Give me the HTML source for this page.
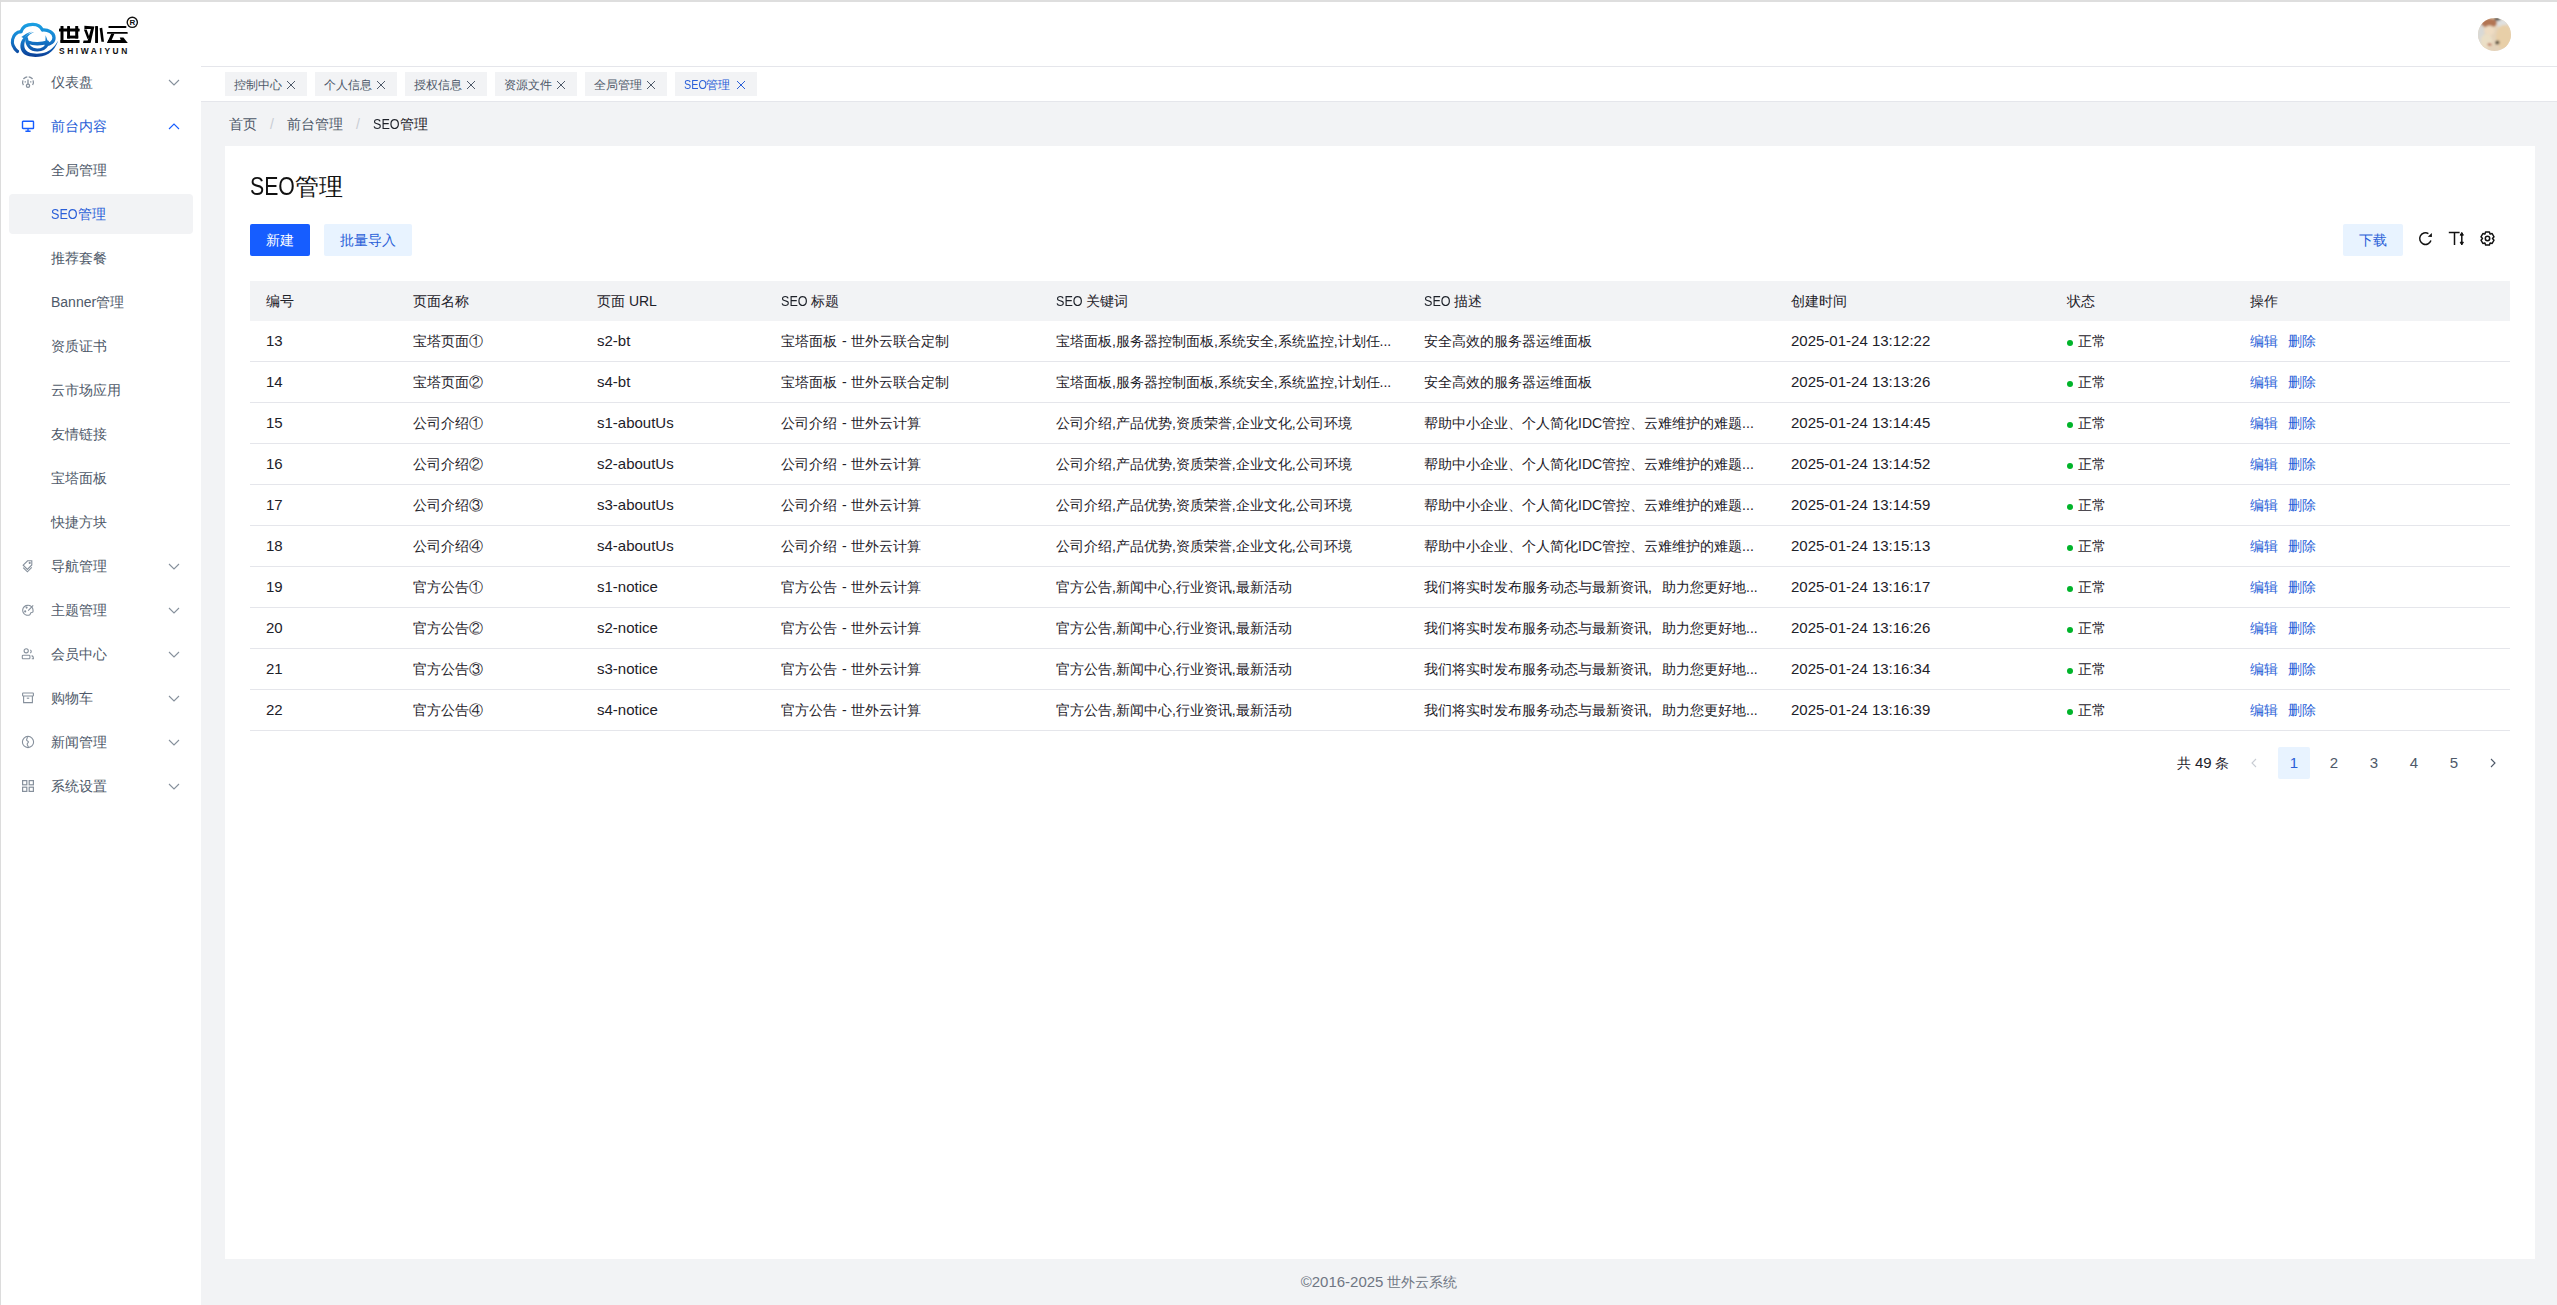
<!DOCTYPE html>
<html><head><meta charset="utf-8">
<style>
*{box-sizing:border-box;margin:0;padding:0}
html,body{width:2557px;height:1305px;overflow:hidden;background:#fff;font-family:"Liberation Sans",sans-serif;color:#1d2129;font-size:14px}
.abs{position:absolute}
#topline{left:0;top:0;width:2557px;height:2px;background:#dedede}
#leftline{left:0;top:0;width:1px;height:1305px;background:#dcdcdc}
#main{left:201px;top:102px;width:2356px;height:1203px;background:#f2f3f5}
#tabbar{left:201px;top:66px;width:2356px;height:36px;border-top:1px solid #e5e6eb;border-bottom:1px solid #e5e6eb;background:#fff}
.tag{position:absolute;top:5px;height:24px;width:82px;background:#f2f3f5;color:#4e5969;font-size:12px;line-height:26px;padding-left:9px;white-space:nowrap}
.tag .x{position:absolute;top:1px;left:60px}
.tag.on{color:#2a5fd8}
.mi{position:absolute;left:9px;width:184px;height:40px;line-height:40px;color:#4e5969;font-size:14px;border-radius:4px}
.mi .t{position:absolute;left:42px;top:0;white-space:nowrap}
.mi.sel,.mi.open{color:#2a5fd8}
.mi.sel{background:#f2f3f5}
.mi .ic{position:absolute;left:12px;top:13px;width:14px;height:14px;line-height:0}
.mi .ar{position:absolute;left:159px;top:16px}
#bc{left:229px;top:113px;height:22px;line-height:22px;font-size:14px;color:#4e5969;white-space:nowrap}
#bc .s{color:#c9cdd4;display:inline-block;width:30px;text-align:center}
#bc .cur{color:#1d2129}
#card{left:225px;top:146px;width:2310px;height:1113px;background:#fff}
#title{left:250px;top:168px;font-size:24px;line-height:36px;color:#111;white-space:nowrap}
#title .sl{display:inline-block;font-size:25px;transform:scaleX(.85);transform-origin:0 0;margin-right:-7.9px}
.lat,.tr .c.lat{font-size:15px}
.seo{display:inline-block;transform:scaleX(.9);transform-origin:0 0;margin-right:-3px}
.bl{color:#2a5fd8}
.btn{position:absolute;top:224px;height:32px;line-height:32px;font-size:14px;text-align:center;border-radius:2px;white-space:nowrap}
#table{left:250px;top:281px;width:2260px;height:450px}
.thead{position:absolute;left:0;top:0;width:2260px;height:40px;background:#f2f3f5}
.tr{position:absolute;left:0;width:2260px;height:41px;border-bottom:1px solid #e5e6eb}
.c{position:absolute;top:0;line-height:40px;white-space:nowrap;font-size:14px;color:#1d2129}
.thead .c{font-weight:normal}
.dot{display:inline-block;width:6px;height:6px;border-radius:50%;background:#00b42a;margin-right:5px;vertical-align:0}
.op{color:#2a5fd8}
.pg{position:absolute;top:747px;width:32px;height:32px;line-height:32px;text-align:center;font-size:15px;color:#4e5969;border-radius:2px;letter-spacing:0}
#footer{left:201px;top:1271px;width:2356px;text-align:center;font-size:14px;line-height:22px;color:#6f7683;white-space:nowrap}
#footer .lat{font-size:15px}
</style></head>
<body>
<div id="topline" class="abs"></div>
<div id="main" class="abs"></div>
<div id="tabbar" class="abs">
<div class="tag" style="left:24px">控制中心<svg class="x" width="12" height="24" viewBox="0 0 12 24" fill="none" stroke="#4e5969" stroke-width="1"><path d="M2 8l8 8M10 8l-8 8"/></svg></div>
<div class="tag" style="left:114px">个人信息<svg class="x" width="12" height="24" viewBox="0 0 12 24" fill="none" stroke="#4e5969" stroke-width="1"><path d="M2 8l8 8M10 8l-8 8"/></svg></div>
<div class="tag" style="left:204px">授权信息<svg class="x" width="12" height="24" viewBox="0 0 12 24" fill="none" stroke="#4e5969" stroke-width="1"><path d="M2 8l8 8M10 8l-8 8"/></svg></div>
<div class="tag" style="left:294px">资源文件<svg class="x" width="12" height="24" viewBox="0 0 12 24" fill="none" stroke="#4e5969" stroke-width="1"><path d="M2 8l8 8M10 8l-8 8"/></svg></div>
<div class="tag" style="left:384px">全局管理<svg class="x" width="12" height="24" viewBox="0 0 12 24" fill="none" stroke="#4e5969" stroke-width="1"><path d="M2 8l8 8M10 8l-8 8"/></svg></div>
<div class="tag on" style="left:474px"><span class="seo">SEO</span>管理<svg class="x" width="12" height="24" viewBox="0 0 12 24" fill="none" stroke="#2a5fd8" stroke-width="1"><path d="M2 8l8 8M10 8l-8 8"/></svg></div>
</div>
<div id="leftline" class="abs"></div>

<!-- logo -->
<svg class="abs" style="left:0;top:0" width="150" height="62" viewBox="0 0 150 62">
<defs>
<linearGradient id="lg1" x1="0" y1="22" x2="0" y2="57" gradientUnits="userSpaceOnUse"><stop offset="0" stop-color="#1ba3e4"/><stop offset=".45" stop-color="#1783d2"/><stop offset="1" stop-color="#0a3d96"/></linearGradient>
</defs>
<g fill="none" stroke="url(#lg1)" stroke-linecap="round" stroke-linejoin="round">
<path d="M21 31.6C22.5 27 27 24.3 33 24.4C37.5 24.5 41 26.8 42.5 30C48 29.5 53.8 32.5 54 37.5C54.2 41.5 50.5 44.3 46 44.6" stroke-width="3.3"/>
<path d="M21 31.6C16.8 32 13.6 35 12.6 39.5C11.8 43.5 13.5 48 17.5 51.5" stroke-width="3.1"/>
<path d="M28.5 42.2C33 44.2 41 44.4 47.5 42.2" stroke-width="3.4"/>
<path d="M26.6 38.6C26.8 46 31 50.2 37.5 50C42 49.8 45.5 47.6 47 45" stroke-width="3"/>
</g>
<g fill="url(#lg1)">
<path d="M34.4 31.8C28 33.5 22 37.5 20.6 43.5C19.5 49 22 54 27.5 55.8C33 57.6 42 57.5 48.5 53.8C53 51.2 56.5 46 58.2 40.6C55.5 45.5 51.5 50 46.5 52C41 54.2 33.5 54.3 28.8 52.3C24.8 50.5 23.6 46.5 24.6 42.5C25.8 37.8 29.5 34 34.4 31.8Z"/>
<path d="M21.3 37C24 34.6 28 32.6 31.8 31.4C28.5 33.4 25.6 35.6 23.8 38.2Z"/>
<path d="M45.6 35.2L47.9 41.6L45.4 41.9Z"/>
<path d="M17.8 52.2L14.6 49.6L19.2 50.6Z"/>
</g>
<g fill="#000">
<rect x="59" y="28.6" width="20.6" height="2.9" rx=".6"/>
<rect x="60.5" y="26" width="3" height="16.9" rx=".5"/>
<rect x="60.5" y="40" width="19.1" height="2.9" rx=".6"/>
<rect x="67.1" y="26" width="2.9" height="12.5" rx=".5"/>
<rect x="75.2" y="26" width="3" height="12.5" rx=".5"/>
<rect x="67.1" y="35.6" width="11.1" height="2.9"/>
<path d="M84.4 25.8L94.4 26.4L90.6 42.9L83 42.9L83.6 40.4L87.7 40.4L90.9 28.9L84.4 28.9Z"/>
<path d="M83.9 29.4L86.7 29.4L89.3 37L87.6 39.2Z"/>
<rect x="95.1" y="26" width="2.9" height="16.9" rx=".5"/>
<path d="M99.6 28.2L102.2 27.8L104 41.8L101.4 41.8Z"/>
<rect x="108.3" y="26" width="18.2" height="1.9" rx=".9"/>
<rect x="106.9" y="32" width="20.9" height="1.8" rx=".9"/>
<path d="M111.2 33.8L114.4 33.8L110.4 42.9L107 42.9Z"/>
<path d="M108.2 40L121.6 40L122.6 42.9L107.4 42.9Z"/>
<path d="M119.8 37.4L123.4 37.4L127.8 42.9L121.6 42.9Z"/>
</g>
<text x="59" y="54" font-family="Liberation Sans" font-size="8.4" font-weight="bold" fill="#111" style="letter-spacing:2.6px">SHIWAIYUN</text>
<circle cx="132.3" cy="22.3" r="5.1" fill="none" stroke="#111" stroke-width="1.4"/>
<text x="129.6" y="25.3" font-family="Liberation Sans" font-size="8" font-weight="bold" fill="#111">R</text>
</svg>

<!-- avatar -->
<svg class="abs" style="left:2478px;top:18px" width="33" height="33" viewBox="0 0 33 33">
<defs><clipPath id="avc"><circle cx="16.5" cy="16.5" r="16.5"/></clipPath><filter id="avb" x="-20%" y="-20%" width="140%" height="140%"><feGaussianBlur stdDeviation=".9"/></filter></defs>
<g clip-path="url(#avc)">
<rect width="33" height="33" fill="#e4d3bb"/>
<g filter="url(#avb)">
<ellipse cx="23.5" cy="5" rx="6" ry="4" fill="#dfe0df"/>
<ellipse cx="26" cy="19" rx="8" ry="12" fill="#e8cfa8"/>
<ellipse cx="2.5" cy="16" rx="4" ry="11" fill="#d9d9d6"/>
<ellipse cx="11" cy="5" rx="8" ry="4.5" fill="#b27552"/>
<ellipse cx="11.5" cy="12.5" rx="5" ry="5" fill="#efdcc2"/>
<ellipse cx="8.5" cy="23" rx="6" ry="7" fill="#ebdfc6"/>
<ellipse cx="19.5" cy="24.5" rx="2" ry="2" fill="#4d4535"/>
<ellipse cx="11.5" cy="26.5" rx="2" ry="1.2" fill="#b86a50"/>
<ellipse cx="19.5" cy="1" rx="3" ry="1.5" fill="#3a3a3a"/>
</g>
</g>
</svg>

<!-- sidebar -->
<div class="abs" style="left:0;top:0;width:201px;height:1305px">
<div class="mi" style="top:62px"><span class="ic"><svg width="14" height="14" viewBox="0 0 14 14" fill="none" stroke="#86909c" stroke-width="1.3"><path d="M3 10.8A5.4 5.4 0 1 1 11 10.8" stroke-dasharray="4.6 1.3" stroke-dashoffset="-1"/><path d="M7 4.6V9"/><circle cx="7" cy="10.7" r="1.6"/><path d="M3.6 6.9h1.3M9.1 6.9h1.3"/></svg></span><span class="t">仪表盘</span><svg class="ar" width="12" height="9" viewBox="0 0 12 9" fill="none" stroke="#86909c" stroke-width="1.1"><path d="M1 2L6 7L11 2"/></svg></div>
<div class="mi open" style="top:106px"><span class="ic"><svg width="14" height="14" viewBox="0 0 14 14" fill="none" stroke="#165dff" stroke-width="1.4"><rect x="1.5" y="2.2" width="11" height="7.3" rx=".6"/><path d="M7 9.8v2.3M4.4 12.3h5.2"/></svg></span><span class="t">前台内容</span><svg class="ar" width="12" height="9" viewBox="0 0 12 9" fill="none" stroke="#165dff" stroke-width="1.1"><path d="M1 7L6 2L11 7"/></svg></div>
<div class="mi" style="top:150px"><span class="t">全局管理</span></div>
<div class="mi sel" style="top:194px"><span class="t"><span class="seo">SEO</span>管理</span></div>
<div class="mi" style="top:238px"><span class="t">推荐套餐</span></div>
<div class="mi" style="top:282px"><span class="t">Banner管理</span></div>
<div class="mi" style="top:326px"><span class="t">资质证书</span></div>
<div class="mi" style="top:370px"><span class="t">云市场应用</span></div>
<div class="mi" style="top:414px"><span class="t">友情链接</span></div>
<div class="mi" style="top:458px"><span class="t">宝塔面板</span></div>
<div class="mi" style="top:502px"><span class="t">快捷方块</span></div>
<div class="mi" style="top:546px"><span class="ic"><svg width="14" height="14" viewBox="0 0 14 14" fill="none" stroke="#86909c" stroke-width="1.1"><path d="M2.2 6.2L6.6 1.8h4.2v4.2L6.4 10.4z"/><path d="M2.2 8.6l4.2 4.2 4.4-4.4"/><circle cx="8.7" cy="3.9" r=".5" fill="#86909c"/></svg></span><span class="t">导航管理</span><svg class="ar" width="12" height="9" viewBox="0 0 12 9" fill="none" stroke="#86909c" stroke-width="1.1"><path d="M1 2L6 7L11 2"/></svg></div>
<div class="mi" style="top:590px"><span class="ic"><svg width="14" height="14" viewBox="0 0 14 14" fill="none" stroke="#86909c" stroke-width="1.1"><path d="M11.6 5.2A5.2 5 0 1 0 8.5 12c1 -.3 .6-1.6 1.3-2.2.8-.6 2.3 0 2.3-1.5 0-1-.2-2.1-.5-3.1z"/><path d="M7.2 7.6L12.2 2.4"/><circle cx="4.2" cy="8.4" r=".5" fill="#86909c"/><circle cx="5.6" cy="4.6" r=".5" fill="#86909c"/></svg></span><span class="t">主题管理</span><svg class="ar" width="12" height="9" viewBox="0 0 12 9" fill="none" stroke="#86909c" stroke-width="1.1"><path d="M1 2L6 7L11 2"/></svg></div>
<div class="mi" style="top:634px"><span class="ic"><svg width="14" height="14" viewBox="0 0 14 14" fill="none" stroke="#86909c" stroke-width="1.1"><circle cx="5.2" cy="3.8" r="2.1"/><rect x="1.3" y="8.2" width="7.6" height="3.6" rx=".8"/><path d="M9.2 2.9a1.6 1.6 0 0 1 0 3"/><path d="M10.6 8.6c1 .3 1.8 1.2 1.8 2.3v.9h-1.6"/></svg></span><span class="t">会员中心</span><svg class="ar" width="12" height="9" viewBox="0 0 12 9" fill="none" stroke="#86909c" stroke-width="1.1"><path d="M1 2L6 7L11 2"/></svg></div>
<div class="mi" style="top:678px"><span class="ic"><svg width="14" height="14" viewBox="0 0 14 14" fill="none" stroke="#86909c" stroke-width="1.1"><rect x="1.6" y="2" width="10.8" height="3" rx=".6"/><path d="M2.6 5v6.6h8.8V5"/><path d="M5.8 7.2h2.4"/></svg></span><span class="t">购物车</span><svg class="ar" width="12" height="9" viewBox="0 0 12 9" fill="none" stroke="#86909c" stroke-width="1.1"><path d="M1 2L6 7L11 2"/></svg></div>
<div class="mi" style="top:722px"><span class="ic"><svg width="14" height="14" viewBox="0 0 14 14" fill="none" stroke="#86909c" stroke-width="1.1"><circle cx="7" cy="7" r="5.6"/><path d="M6.2 1.6c.6 1.4-.6 2.4-.6 3.4s1.6 1 1.8 1.8c.2.8-1.4 1.6-1.2 2.6.2 1 .8 1.2 1.2 2.8"/></svg></span><span class="t">新闻管理</span><svg class="ar" width="12" height="9" viewBox="0 0 12 9" fill="none" stroke="#86909c" stroke-width="1.1"><path d="M1 2L6 7L11 2"/></svg></div>
<div class="mi" style="top:766px"><span class="ic"><svg width="14" height="14" viewBox="0 0 14 14" fill="none" stroke="#86909c" stroke-width="1.2"><rect x="1.6" y="1.6" width="4.2" height="4.2"/><rect x="8.2" y="1.6" width="4.2" height="4.2"/><rect x="1.6" y="8.2" width="4.2" height="4.2"/><rect x="8.2" y="8.2" width="4.2" height="4.2"/></svg></span><span class="t">系统设置</span><svg class="ar" width="12" height="9" viewBox="0 0 12 9" fill="none" stroke="#86909c" stroke-width="1.1"><path d="M1 2L6 7L11 2"/></svg></div>
</div>

<div id="bc" class="abs">首页<span class="s">/</span>前台管理<span class="s">/</span><span class="cur"><span class="seo">SEO</span>管理</span></div>

<div id="card" class="abs"></div>
<div id="title" class="abs"><span class="sl">SEO</span>管理</div>
<div class="btn" style="left:250px;width:60px;background:#165dff;color:#fff">新建</div>
<div class="btn" style="left:324px;width:88px;background:#e8f3ff;color:#2a5fd8">批量导入</div>
<div class="btn" style="left:2343px;width:60px;background:#e8f3ff;color:#2a5fd8">下载</div>

<!-- toolbar icons -->
<svg class="abs" style="left:2417px;top:231px" width="16" height="16" viewBox="0 0 16 16"><path d="M11.4 2.6A5.8 5.8 0 1 0 13.95 9.6" fill="none" stroke="#111" stroke-width="1.5"/><path d="M14.9 2.1L14.9 6.1L10.7 5.7Z" fill="#111"/></svg>
<svg class="abs" style="left:2448px;top:231px" width="17" height="16" viewBox="0 0 17 16" fill="none" stroke="#111" stroke-width="1.5"><path d="M0.8 1.6h10.8M6.5 1.6v12.4"/><path d="M13.8 2.8v9.6"/><path d="M12.2 4.2l1.6-2.8 1.6 2.8zM12.2 11.2l1.6 2.8 1.6-2.8z" fill="#111" stroke-width="1"/></svg>
<svg class="abs" style="left:2479px;top:230px" width="17" height="17" viewBox="0 0 17 17" fill="none" stroke="#111" stroke-width="1.5" stroke-linejoin="round"><path d="M6.6 1.9h3.8l.7 2.2 2-.6 1.9 3.3-1.5 1.7 1.5 1.7-1.9 3.3-2-.6-.7 2.2H6.6l-.7-2.2-2 .6L2 10.2l1.5-1.7L2 6.8l1.9-3.3 2 .6z"/><circle cx="8.5" cy="8.5" r="2.2"/></svg>

<div id="table" class="abs">
<div class="thead">
<span class="c" style="left:16px">编号</span>
<span class="c" style="left:163px">页面名称</span>
<span class="c" style="left:347px">页面 URL</span>
<span class="c" style="left:531px"><span class="seo">SEO</span> 标题</span>
<span class="c" style="left:806px"><span class="seo">SEO</span> 关键词</span>
<span class="c" style="left:1174px"><span class="seo">SEO</span> 描述</span>
<span class="c" style="left:1541px">创建时间</span>
<span class="c" style="left:1817px">状态</span>
<span class="c" style="left:2000px">操作</span>
</div>
<div class="tr" style="top:40px">
<span class="c lat" style="left:16px">13</span>
<span class="c" style="left:163px">宝塔页面①</span>
<span class="c lat" style="left:347px">s2-bt</span>
<span class="c" style="left:531px">宝塔面板<span style="word-spacing:1px"> - </span>世外云联合定制</span>
<span class="c" style="left:806px">宝塔面板,服务器控制面板,系统安全,系统监控,计划任...</span>
<span class="c" style="left:1174px">安全高效的服务器运维面板</span>
<span class="c lat" style="left:1541px">2025-01-24 13:12:22</span>
<span class="c st" style="left:1817px"><i class="dot"></i>正常</span>
<span class="c op" style="left:2000px">编辑</span><span class="c op" style="left:2038px">删除</span>
</div>
<div class="tr" style="top:81px">
<span class="c lat" style="left:16px">14</span>
<span class="c" style="left:163px">宝塔页面②</span>
<span class="c lat" style="left:347px">s4-bt</span>
<span class="c" style="left:531px">宝塔面板<span style="word-spacing:1px"> - </span>世外云联合定制</span>
<span class="c" style="left:806px">宝塔面板,服务器控制面板,系统安全,系统监控,计划任...</span>
<span class="c" style="left:1174px">安全高效的服务器运维面板</span>
<span class="c lat" style="left:1541px">2025-01-24 13:13:26</span>
<span class="c st" style="left:1817px"><i class="dot"></i>正常</span>
<span class="c op" style="left:2000px">编辑</span><span class="c op" style="left:2038px">删除</span>
</div>
<div class="tr" style="top:122px">
<span class="c lat" style="left:16px">15</span>
<span class="c" style="left:163px">公司介绍①</span>
<span class="c lat" style="left:347px">s1-aboutUs</span>
<span class="c" style="left:531px">公司介绍<span style="word-spacing:1px"> - </span>世外云计算</span>
<span class="c" style="left:806px">公司介绍,产品优势,资质荣誉,企业文化,公司环境</span>
<span class="c" style="left:1174px">帮助中小企业、个人简化IDC管控、云难维护的难题...</span>
<span class="c lat" style="left:1541px">2025-01-24 13:14:45</span>
<span class="c st" style="left:1817px"><i class="dot"></i>正常</span>
<span class="c op" style="left:2000px">编辑</span><span class="c op" style="left:2038px">删除</span>
</div>
<div class="tr" style="top:163px">
<span class="c lat" style="left:16px">16</span>
<span class="c" style="left:163px">公司介绍②</span>
<span class="c lat" style="left:347px">s2-aboutUs</span>
<span class="c" style="left:531px">公司介绍<span style="word-spacing:1px"> - </span>世外云计算</span>
<span class="c" style="left:806px">公司介绍,产品优势,资质荣誉,企业文化,公司环境</span>
<span class="c" style="left:1174px">帮助中小企业、个人简化IDC管控、云难维护的难题...</span>
<span class="c lat" style="left:1541px">2025-01-24 13:14:52</span>
<span class="c st" style="left:1817px"><i class="dot"></i>正常</span>
<span class="c op" style="left:2000px">编辑</span><span class="c op" style="left:2038px">删除</span>
</div>
<div class="tr" style="top:204px">
<span class="c lat" style="left:16px">17</span>
<span class="c" style="left:163px">公司介绍③</span>
<span class="c lat" style="left:347px">s3-aboutUs</span>
<span class="c" style="left:531px">公司介绍<span style="word-spacing:1px"> - </span>世外云计算</span>
<span class="c" style="left:806px">公司介绍,产品优势,资质荣誉,企业文化,公司环境</span>
<span class="c" style="left:1174px">帮助中小企业、个人简化IDC管控、云难维护的难题...</span>
<span class="c lat" style="left:1541px">2025-01-24 13:14:59</span>
<span class="c st" style="left:1817px"><i class="dot"></i>正常</span>
<span class="c op" style="left:2000px">编辑</span><span class="c op" style="left:2038px">删除</span>
</div>
<div class="tr" style="top:245px">
<span class="c lat" style="left:16px">18</span>
<span class="c" style="left:163px">公司介绍④</span>
<span class="c lat" style="left:347px">s4-aboutUs</span>
<span class="c" style="left:531px">公司介绍<span style="word-spacing:1px"> - </span>世外云计算</span>
<span class="c" style="left:806px">公司介绍,产品优势,资质荣誉,企业文化,公司环境</span>
<span class="c" style="left:1174px">帮助中小企业、个人简化IDC管控、云难维护的难题...</span>
<span class="c lat" style="left:1541px">2025-01-24 13:15:13</span>
<span class="c st" style="left:1817px"><i class="dot"></i>正常</span>
<span class="c op" style="left:2000px">编辑</span><span class="c op" style="left:2038px">删除</span>
</div>
<div class="tr" style="top:286px">
<span class="c lat" style="left:16px">19</span>
<span class="c" style="left:163px">官方公告①</span>
<span class="c lat" style="left:347px">s1-notice</span>
<span class="c" style="left:531px">官方公告<span style="word-spacing:1px"> - </span>世外云计算</span>
<span class="c" style="left:806px">官方公告,新闻中心,行业资讯,最新活动</span>
<span class="c" style="left:1174px">我们将实时发布服务动态与最新资讯<span style="display:inline-block;width:14px">,</span>助力您更好地...</span>
<span class="c lat" style="left:1541px">2025-01-24 13:16:17</span>
<span class="c st" style="left:1817px"><i class="dot"></i>正常</span>
<span class="c op" style="left:2000px">编辑</span><span class="c op" style="left:2038px">删除</span>
</div>
<div class="tr" style="top:327px">
<span class="c lat" style="left:16px">20</span>
<span class="c" style="left:163px">官方公告②</span>
<span class="c lat" style="left:347px">s2-notice</span>
<span class="c" style="left:531px">官方公告<span style="word-spacing:1px"> - </span>世外云计算</span>
<span class="c" style="left:806px">官方公告,新闻中心,行业资讯,最新活动</span>
<span class="c" style="left:1174px">我们将实时发布服务动态与最新资讯<span style="display:inline-block;width:14px">,</span>助力您更好地...</span>
<span class="c lat" style="left:1541px">2025-01-24 13:16:26</span>
<span class="c st" style="left:1817px"><i class="dot"></i>正常</span>
<span class="c op" style="left:2000px">编辑</span><span class="c op" style="left:2038px">删除</span>
</div>
<div class="tr" style="top:368px">
<span class="c lat" style="left:16px">21</span>
<span class="c" style="left:163px">官方公告③</span>
<span class="c lat" style="left:347px">s3-notice</span>
<span class="c" style="left:531px">官方公告<span style="word-spacing:1px"> - </span>世外云计算</span>
<span class="c" style="left:806px">官方公告,新闻中心,行业资讯,最新活动</span>
<span class="c" style="left:1174px">我们将实时发布服务动态与最新资讯<span style="display:inline-block;width:14px">,</span>助力您更好地...</span>
<span class="c lat" style="left:1541px">2025-01-24 13:16:34</span>
<span class="c st" style="left:1817px"><i class="dot"></i>正常</span>
<span class="c op" style="left:2000px">编辑</span><span class="c op" style="left:2038px">删除</span>
</div>
<div class="tr" style="top:409px">
<span class="c lat" style="left:16px">22</span>
<span class="c" style="left:163px">官方公告④</span>
<span class="c lat" style="left:347px">s4-notice</span>
<span class="c" style="left:531px">官方公告<span style="word-spacing:1px"> - </span>世外云计算</span>
<span class="c" style="left:806px">官方公告,新闻中心,行业资讯,最新活动</span>
<span class="c" style="left:1174px">我们将实时发布服务动态与最新资讯<span style="display:inline-block;width:14px">,</span>助力您更好地...</span>
<span class="c lat" style="left:1541px">2025-01-24 13:16:39</span>
<span class="c st" style="left:1817px"><i class="dot"></i>正常</span>
<span class="c op" style="left:2000px">编辑</span><span class="c op" style="left:2038px">删除</span>
</div>
</div>

<!-- pagination -->
<div class="abs" style="left:2177px;top:751px;line-height:24px;font-size:14px;color:#1d2129;white-space:nowrap">共 <span class="lat">49</span> 条</div>
<svg class="abs" style="left:2248px;top:757px" width="12" height="12" viewBox="0 0 12 12" fill="none" stroke="#c9cdd4" stroke-width="1.1"><path d="M8 2L4 6l4 4"/></svg>
<div class="pg" style="left:2278px;background:#e8f3ff;color:#2a5fd8">1</div>
<div class="pg" style="left:2318px">2</div>
<div class="pg" style="left:2358px">3</div>
<div class="pg" style="left:2398px">4</div>
<div class="pg" style="left:2438px">5</div>
<svg class="abs" style="left:2487px;top:757px" width="12" height="12" viewBox="0 0 12 12" fill="none" stroke="#4e5969" stroke-width="1.1"><path d="M4 2l4 4-4 4"/></svg>

<div id="footer" class="abs"><span class="lat">©2016-2025</span> 世外云系统</div>
</body></html>
